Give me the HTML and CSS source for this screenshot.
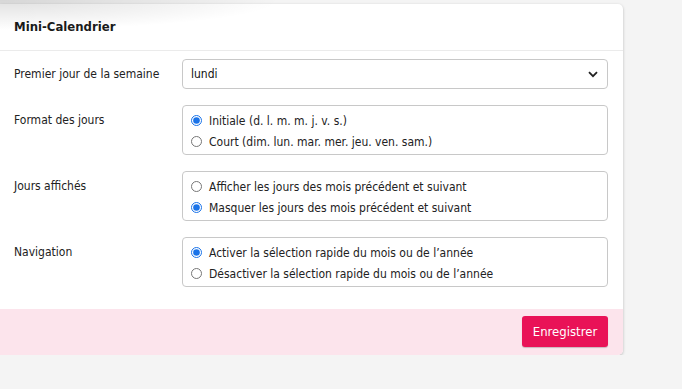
FILE: index.html
```html
<!DOCTYPE html>
<html lang="fr">
<head>
    <meta charset="UTF-8">
    <meta name="viewport" content="width=device-width, initial-scale=1.0">
    <title>Mini-Calendrier</title>
    <link rel="stylesheet" href="styles.css">
</head>
<body>
    <div class="page-shade"></div>
    <form class="card">
        <div class="card-header">Mini-Calendrier</div>
        <div class="card-body">
            <div class="row">
                <label class="row-label" for="firstDay">Premier jour de la semaine</label>
                <div class="select-wrap">
                    <select id="firstDay">
                        <option>lundi</option>
                        <option>dimanche</option>
                    </select>
                    <svg class="chevron" width="10" height="7" viewBox="0 0 10 7"><path d="M1 1.2l4 4 4-4" fill="none" stroke="#222" stroke-width="1.8"/></svg>
                </div>
            </div>
            <div class="row">
                <div class="row-label">Format des jours</div>
                <div class="choice-box">
                    <label class="choice"><input type="radio" name="format" checked> Initiale (d. l. m. m. j. v. s.)</label>
                    <label class="choice"><input type="radio" name="format"> Court (dim. lun. mar. mer. jeu. ven. sam.)</label>
                </div>
            </div>
            <div class="row">
                <div class="row-label">Jours affichés</div>
                <div class="choice-box">
                    <label class="choice"><input type="radio" name="days"> Afficher les jours des mois précédent et suivant</label>
                    <label class="choice"><input type="radio" name="days" checked> Masquer les jours des mois précédent et suivant</label>
                </div>
            </div>
            <div class="row">
                <div class="row-label">Navigation</div>
                <div class="choice-box">
                    <label class="choice"><input type="radio" name="nav" checked> Activer la sélection rapide du mois ou de l’année</label>
                    <label class="choice"><input type="radio" name="nav"> Désactiver la sélection rapide du mois ou de l’année</label>
                </div>
            </div>
        </div>
        <div class="card-footer">
            <button type="button" class="btn-save">Enregistrer</button>
        </div>
    </form>
</body>
</html>
```

FILE: styles.css
```css
body {
    margin: 0;
    background-color: #f4f4f4;
    font-family: Tahoma, "DejaVu Sans Condensed", "DejaVu Sans", sans-serif;
    font-size: 12px;
    color: #222;
}
.page-shade {
    position: absolute;
    top: 0;
    left: 0;
    width: 300px;
    height: 40px;
    background: radial-gradient(ellipse 280px 30px at 0 0, rgba(0, 0, 0, 0.12), rgba(0, 0, 0, 0));
    pointer-events: none;
    z-index: 2;
}
.card {
    width: 623px;
    margin-top: 4px;
    background: #fff;
    border-radius: 0 5px 5px 0;
    box-shadow: 0 1px 3px rgba(0, 0, 0, 0.25);
    overflow: hidden;
}
.card-header {
    height: 46px;
    line-height: 46px;
    padding-left: 14px;
    font-weight: bold;
    font-size: 13px;
    color: #1a1a1a;
    border-bottom: 1px solid #ebebeb;
}
.card-body {
    padding: 8px 15px 22px 14px;
}
.row {
    display: flex;
    margin-bottom: 16px;
}
.row:last-child {
    margin-bottom: 0;
}
.row-label {
    width: 168px;
    padding-top: 8px;
    color: #222;
}
.select-wrap {
    position: relative;
    flex: 1;
}
select {
    display: block;
    width: 100%;
    height: 30px;
    padding: 0 8px;
    border: 1px solid #c8c8c8;
    border-radius: 4px;
    background: #fff;
    font: inherit;
    color: #111;
    appearance: none;
    outline: none;
}
.chevron {
    position: absolute;
    right: 10px;
    top: 12px;
}
.choice-box {
    flex: 1;
    border: 1px solid #c8c8c8;
    border-radius: 4px;
    padding: 4px 8px 2px;
}
.choice {
    display: flex;
    align-items: center;
    height: 21px;
    gap: 7px;
}
.choice input {
    margin: 0;
    width: 11px;
    height: 11px;
    accent-color: #1a73e8;
}
.card-footer {
    background-color: #fce4ec;
    padding: 7px 15px 8px;
    display: flex;
    justify-content: flex-end;
}
.btn-save {
    width: 86px;
    height: 31px;
    border: none;
    border-radius: 3px;
    background-color: #e91257;
    color: #fff;
    font: inherit;
    font-size: 13px;
    box-shadow: 0 1px 1px rgba(0, 0, 0, 0.2);
}
```
